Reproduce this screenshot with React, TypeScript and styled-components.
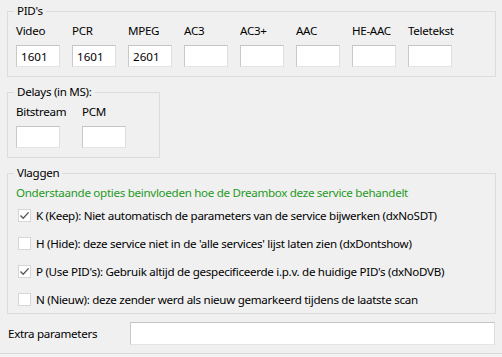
import styled, { createGlobalStyle } from "styled-components";

const GlobalStyle = createGlobalStyle`
  html, body {
    margin: 0;
    padding: 0;
    background: #f0f0f0;
  }
  body {
    font-family: "Noto Sans", "Open Sans", sans-serif;
    font-size: 11.6px;
    letter-spacing: -0.3px;
    color: #000;
  }
`;

const Frame = styled.div`
  width: 502px;
  height: 357px;
  display: flex;
  flex-direction: column;
  background: #f0f0f0;
  overflow: hidden;
`;

const Content = styled.div`
  display: flex;
  flex-direction: column;
  align-items: flex-start;
  padding: 3px 6px 0 7px;
`;

const Group = styled.fieldset<{ $width: number; $bottom?: number }>`
  box-sizing: border-box;
  width: ${(p) => p.$width}px;
  margin: 0;
  padding: 4px 8px ${(p) => (p.$bottom ?? 9)}px 8px;
  border: 1px solid #dcdcdc;
  min-width: 0;
  & + & {
    margin-top: 7px;
  }
`;

const Legend = styled.legend`
  padding: 0 3px;
  margin-left: -2px;
  line-height: 16px;
`;

const FieldRow = styled.div<{ $gap: number }>`
  display: flex;
  gap: ${(p) => p.$gap}px;
`;

const Field = styled.div`
  width: 44px;
  display: flex;
  flex-direction: column;
  gap: 6px;
`;

const FieldLabel = styled.span`
  line-height: 16px;
  white-space: nowrap;
`;

const TextBox = styled.input<{ $grow?: boolean }>`
  box-sizing: border-box;
  width: ${(p) => (p.$grow ? "auto" : "100%")};
  flex: ${(p) => (p.$grow ? "1" : "none")};
  height: ${(p) => (p.$grow ? "23px" : "22px")};
  margin: 0;
  padding: 0 4px;
  border: 1px solid;
  border-color: #c4c4c4 #dedede #e4e4e4 #c8c8c8;
  background: #fff;
  font: inherit;
  color: #000;
  outline: none;
`;

const Notice = styled.div`
  color: #1f9a24;
  line-height: 16px;
  white-space: nowrap;
`;

const FlagRow = styled.label`
  height: 28px;
  display: flex;
  align-items: center;
  gap: 5px;
  padding-left: 2px;
  white-space: nowrap;
`;

const Box = styled.span`
  box-sizing: border-box;
  width: 13px;
  height: 13px;
  flex: none;
  display: flex;
  align-items: center;
  justify-content: center;
  background: #fff;
  border: 1px solid #d6d6d6;
`;

const ExtraRow = styled.div`
  align-self: stretch;
  margin-top: 8px;
  display: flex;
  align-items: center;
  padding-left: 1px;
  padding-right: 1px;
`;

const ExtraLabel = styled.span`
  width: 122px;
  flex: none;
  white-space: nowrap;
`;

const Footer = styled.div`
  flex: 1;
  margin-top: 8px;
  border-top: 1px solid #d7d7d7;
  background: #f3f3f3;
`;

const pids = [
  { name: "Video", value: "1601" },
  { name: "PCR", value: "1601" },
  { name: "MPEG", value: "2601" },
  { name: "AC3", value: "" },
  { name: "AC3+", value: "" },
  { name: "AAC", value: "" },
  { name: "HE-AAC", value: "" },
  { name: "Teletekst", value: "" },
];

const flags = [
  { checked: true, text: "K (Keep): Niet automatisch de parameters van de service bijwerken (dxNoSDT)" },
  { checked: false, text: "H (Hide): deze service niet in de 'alle services' lijst laten zien (dxDontshow)" },
  { checked: true, text: "P (Use PID's): Gebruik altijd de gespecificeerde i.p.v. de huidige PID's (dxNoDVB)" },
  { checked: false, text: "N (Nieuw): deze zender werd als nieuw gemarkeerd tijdens de laatste scan" },
];

function CheckBox({ checked }: { checked: boolean }) {
  return (
    <Box>
      {checked && (
        <svg width="11" height="11" viewBox="0 0 11 11">
          <path d="M1.5 5.5 L4.2 8.3 L9.6 2.4" fill="none" stroke="#5a5a5a" strokeWidth="1.4" />
        </svg>
      )}
    </Box>
  );
}

export default function App() {
  return (
    <>
      <GlobalStyle />
      <Frame>
        <Content>
          <Group $width={489}>
            <Legend>PID's</Legend>
            <FieldRow $gap={12}>
              {pids.map((p) => (
                <Field key={p.name}>
                  <FieldLabel>{p.name}</FieldLabel>
                  <TextBox defaultValue={p.value} />
                </Field>
              ))}
            </FieldRow>
          </Group>
          <Group $width={153}>
            <Legend>Delays (in MS):</Legend>
            <FieldRow $gap={22}>
              <Field>
                <FieldLabel>Bitstream</FieldLabel>
                <TextBox />
              </Field>
              <Field>
                <FieldLabel>PCM</FieldLabel>
                <TextBox />
              </Field>
            </FieldRow>
          </Group>
          <Group $width={489} $bottom={0}>
            <Legend>Vlaggen</Legend>
            <Notice>Onderstaande opties beinvloeden hoe de Dreambox deze service behandelt</Notice>
            {flags.map((f) => (
              <FlagRow key={f.text}>
                <CheckBox checked={f.checked} />
                <span>{f.text}</span>
              </FlagRow>
            ))}
          </Group>
          <ExtraRow>
            <ExtraLabel>Extra parameters</ExtraLabel>
            <TextBox $grow />
          </ExtraRow>
        </Content>
        <Footer />
      </Frame>
    </>
  );
}
